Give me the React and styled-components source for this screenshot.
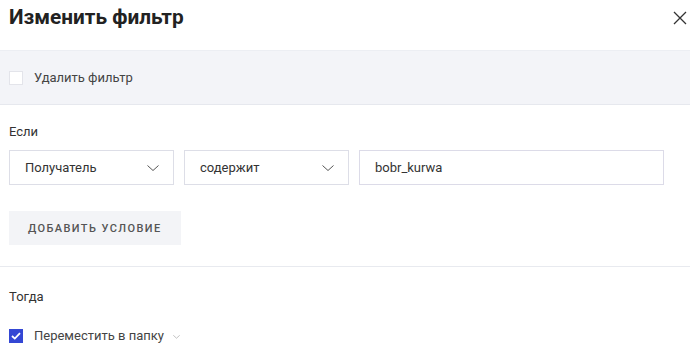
import styled, { createGlobalStyle } from "styled-components";

const GlobalStyle = createGlobalStyle`
  body {
    margin: 0;
    background: #fff;
    font-family: Roboto, "Noto Sans", sans-serif;
    color: #333;
  }
`;

function Chevron({ size = 12 }) {
  return (
    <svg width={size} height={size / 2} viewBox="0 0 12 6" fill="none">
      <path d="M0.5 0.5L6 5.5L11.5 0.5" stroke="#555" strokeWidth="1" />
    </svg>
  );
}

function CloseIcon() {
  return (
    <svg width="14" height="14" viewBox="0 0 14 14" fill="none">
      <path d="M1 1L13 13M13 1L1 13" stroke="#333" strokeWidth="1.3" />
    </svg>
  );
}

function CheckMark() {
  return (
    <svg width="10" height="8" viewBox="0 0 10 8" fill="none">
      <path d="M1 4L3.8 6.6L9 1.2" stroke="#fff" strokeWidth="1.8" />
    </svg>
  );
}

export default function App() {
  return (
    <>
      <GlobalStyle />
      <Dialog>
        <Header>
          <Title>Изменить фильтр</Title>
          <CloseButton>
            <CloseIcon />
          </CloseButton>
        </Header>

        <DeleteBand>
          <CheckRow>
            <Box />
            <CheckLabel>Удалить фильтр</CheckLabel>
          </CheckRow>
        </DeleteBand>

        <Section>
          <Label>Если</Label>
          <Conditions>
            <Select>
              <span>Получатель</span>
              <Chevron />
            </Select>
            <Select>
              <span>содержит</span>
              <Chevron />
            </Select>
            <Input>bobr_kurwa</Input>
          </Conditions>
          <AddButton>Добавить условие</AddButton>
        </Section>

        <Section $last>
          <Label>Тогда</Label>
          <CheckRow $spaced>
            <Box $checked>
              <CheckMark />
            </Box>
            <CheckLabel>Переместить в папку</CheckLabel>
            <SmallChevron>
              <Chevron size={7} />
            </SmallChevron>
          </CheckRow>
        </Section>
      </Dialog>
    </>
  );
}

const Dialog = styled.div`
  width: 690px;
  height: 354px;
  overflow: hidden;
  background: #fff;
`;

const Header = styled.div`
  height: 50px;
  display: flex;
  justify-content: space-between;
  align-items: flex-start;
  padding: 4px 2px 0 9px;
  box-sizing: border-box;
`;

const Title = styled.h1`
  margin: 0;
  font-size: 20.8px;
  line-height: 26px;
  font-weight: 700;
  color: #222;
`;

const CloseButton = styled.div`
  margin-top: 6px;
  width: 16px;
  height: 16px;
  display: flex;
  align-items: center;
  justify-content: center;
`;

const DeleteBand = styled.div`
  height: 55px;
  background: #f3f4f8;
  border-top: 1px solid #eceef3;
  border-bottom: 1px solid #e6e8ee;
  box-sizing: border-box;
  display: flex;
  align-items: center;
  padding-left: 9px;
`;

const CheckRow = styled.div`
  display: flex;
  align-items: center;
  gap: 11px;
  margin-top: ${(p) => (p.$spaced ? "23px" : "0")};
`;

const Box = styled.div`
  width: 14px;
  height: 14px;
  box-sizing: border-box;
  border: 1px solid ${(p) => (p.$checked ? "#3447d4" : "#e3e4ea")};
  background: ${(p) => (p.$checked ? "#3447d4" : "#fff")};
  display: flex;
  align-items: center;
  justify-content: center;
`;

const CheckLabel = styled.span`
  font-size: 13px;
  line-height: 16px;
  color: #444;
`;

const SmallChevron = styled.span`
  display: flex;
  margin-left: -2px;
  margin-top: 2px;
  opacity: 0.6;
`;

const Section = styled.div`
  padding: ${(p) => (p.$last ? "22px 26px 0 9px" : "19px 26px 21px 9px")};
  border-bottom: ${(p) => (p.$last ? "none" : "1px solid #e8eaef")};
`;

const Label = styled.div`
  font-size: 13px;
  line-height: 16px;
  color: #333;
`;

const Conditions = styled.div`
  display: grid;
  grid-template-columns: 165px 165px 1fr;
  gap: 10px;
  margin-top: 10px;
`;

const Select = styled.div`
  height: 35px;
  box-sizing: border-box;
  border: 1px solid #dddee7;
  display: flex;
  align-items: center;
  justify-content: space-between;
  padding: 0 14px 0 15px;
  font-size: 13px;
  color: #333;
`;

const Input = styled.div`
  height: 35px;
  box-sizing: border-box;
  border: 1px solid #dcdbe8;
  display: flex;
  align-items: center;
  padding: 0 15px;
  font-size: 13px;
  color: #333;
`;

const AddButton = styled.button`
  margin-top: 26px;
  height: 34px;
  padding: 0 19px;
  border: none;
  background: #f3f4f7;
  font-family: Roboto, "Noto Sans", sans-serif;
  font-size: 11px;
  font-weight: 500;
  letter-spacing: 1.4px;
  text-transform: uppercase;
  color: #555;
`;
